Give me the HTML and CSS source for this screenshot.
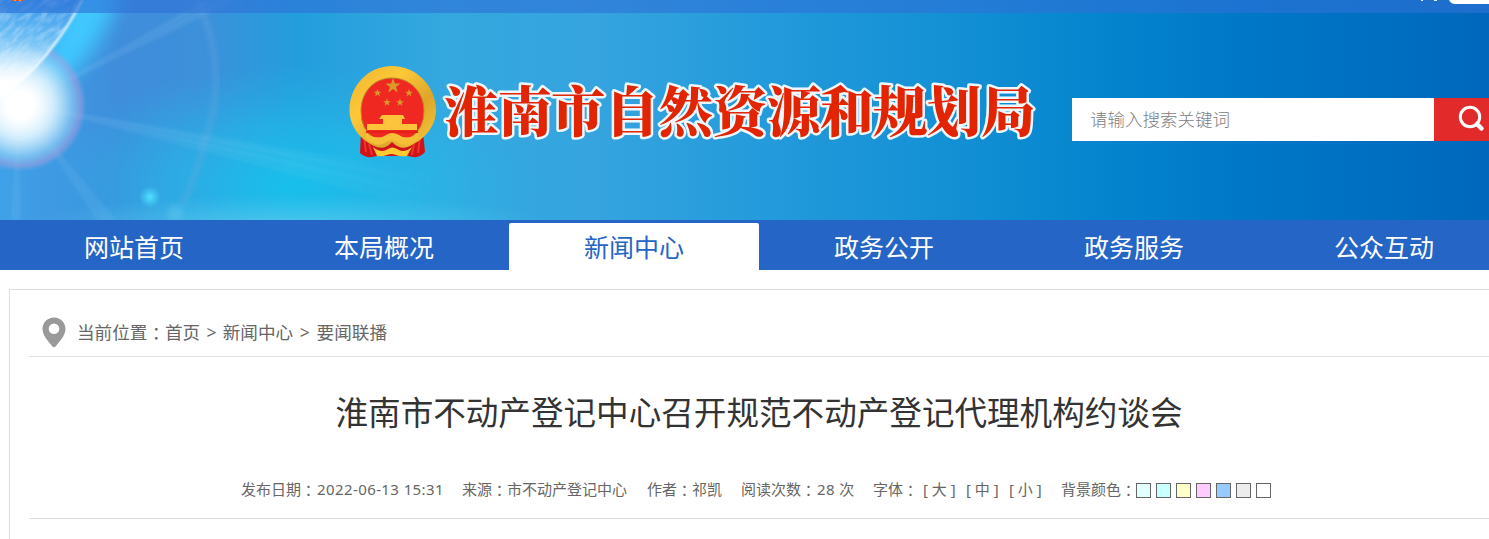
FILE: index.html
```html
<!DOCTYPE html>
<html lang="zh-CN">
<head>
<meta charset="utf-8">
<title>淮南市自然资源和规划局</title>
<link rel="stylesheet" href="styles.css">
</head>
<body>
<header class="header">
  <svg class="sky" viewBox="0 0 1489 220" width="1489" height="220" aria-hidden="true">
    <defs>
      <linearGradient id="base">
        <stop offset="0" stop-color="#3fa2e8"/><stop offset=".08" stop-color="#3f8ddb"/><stop offset=".135" stop-color="#3d90da"/><stop offset=".2" stop-color="#239edd"/><stop offset=".3" stop-color="#34a8df"/><stop offset=".4" stop-color="#35a4df"/><stop offset=".52" stop-color="#229adb"/><stop offset=".65" stop-color="#128fd4"/><stop offset=".73" stop-color="#0586ce"/><stop offset=".84" stop-color="#0077c7"/><stop offset="1" stop-color="#0068bc"/>
      </linearGradient>
      <radialGradient id="cyan"><stop offset="0" stop-color="#16c6ee" stop-opacity=".85"/><stop offset=".5" stop-color="#1fc2ec" stop-opacity=".5"/><stop offset="1" stop-color="#25b8e8" stop-opacity="0"/></radialGradient>
      <radialGradient id="foot"><stop offset="0" stop-color="#68d0f0" stop-opacity=".75"/><stop offset="1" stop-color="#55cdf0" stop-opacity="0"/></radialGradient>
      <radialGradient id="halo"><stop offset="0" stop-color="#e8f8ff"/><stop offset=".5" stop-color="#b5e4fd" stop-opacity=".85"/><stop offset=".78" stop-color="#78c6f6" stop-opacity=".55"/><stop offset=".91" stop-color="#b3a0e0" stop-opacity=".5"/><stop offset="1" stop-color="#80a8e8" stop-opacity="0"/></radialGradient>
      <radialGradient id="sun"><stop offset="0" stop-color="#fff"/><stop offset=".22" stop-color="#fff"/><stop offset=".55" stop-color="#fff" stop-opacity=".5"/><stop offset="1" stop-color="#fff" stop-opacity="0"/></radialGradient>
      <radialGradient id="dot"><stop offset="0" stop-color="#50e4ff"/><stop offset="1" stop-color="#50d4ff" stop-opacity="0"/></radialGradient>
      <linearGradient id="ray" gradientUnits="userSpaceOnUse" x1="20" y1="0" x2="440" y2="0"><stop offset="0" stop-color="#c4e8ff" stop-opacity=".08"/><stop offset=".65" stop-color="#c4e8ff" stop-opacity=".06"/><stop offset="1" stop-color="#c4e8ff" stop-opacity="0"/></linearGradient>
      <linearGradient id="planet" gradientUnits="userSpaceOnUse" x1="35" y1="0" x2="25" y2="85"><stop offset="0" stop-color="#3b98ea"/><stop offset=".4" stop-color="#63b9f4"/><stop offset=".75" stop-color="#b8e2fc"/><stop offset="1" stop-color="#fff"/></linearGradient>
      <filter id="b1"><feGaussianBlur stdDeviation="1"/></filter>
      <filter id="b2"><feGaussianBlur stdDeviation="2.500"/></filter>
      <filter id="b9" x="-50%" y="-50%" width="200%" height="200%"><feGaussianBlur stdDeviation="10"/></filter>
      <filter id="clouds" x="0" y="0" width="100%" height="100%"><feTurbulence type="fractalNoise" baseFrequency=".07 .24" numOctaves="3" seed="4"/><feColorMatrix values="0 0 0 0 1  0 0 0 0 1  0 0 0 0 1  2.6 0 0 0 -1.05"/></filter>
      <clipPath id="disc"><path d="M0 0H82Q52 60 0 99Z"/></clipPath>
    </defs>
    <rect width="1489" height="220" fill="url(#base)"/>
    <ellipse cx="290" cy="185" rx="250" ry="120" fill="url(#cyan)"/>
    <ellipse cx="290" cy="230" rx="270" ry="36" fill="url(#foot)"/>
    <path d="M75 -15H122Q100 60 55 85L30 92Z" fill="#3fc8ff" filter="url(#b9)"/>
    <path d="M198 0Q230 75 205 140Q197 175 182 205" fill="none" stroke="#79a9df" stroke-opacity=".28" stroke-width="6" filter="url(#b2)"/>
    <g fill="url(#ray)" filter="url(#b1)">
      <path d="M20 105L204 0H238Z"/><path d="M20 105L210 0H214Z"/><path d="M20 105L222 0H227Z"/>
      <path d="M20 103L480 181V224Z"/><path d="M20 103L480 189V194Z"/><path d="M20 103L480 203V208Z"/>
      <path d="M20 105L97 220H116Z"/><path d="M18 105L11 220H21Z"/>
    </g>
    <circle cx="20" cy="105" r="67" fill="url(#halo)"/>
    <g clip-path="url(#disc)"><rect width="90" height="102" fill="url(#planet)"/><g transform="rotate(-42)"><rect x="-90" y="-10" width="180" height="150" filter="url(#clouds)" opacity=".3"/></g></g>
    <path d="M82 0Q52 60 0 99" fill="none" stroke="#e9faff" stroke-width="2" filter="url(#b1)"/>
    <circle cx="20" cy="105" r="60" fill="url(#sun)"/>
    <circle cx="150" cy="197" r="11" fill="url(#dot)"/>
    <circle cx="175" cy="213" r="8" fill="#8fdcf5" opacity=".2" filter="url(#b2)"/>
  </svg>
  <div class="topbar">
    <svg width="1489" height="13" viewBox="0 0 1489 13" aria-hidden="true"><path d="M12 0H23V1H12Z" fill="#e7502d"/><path d="M14 0h2v1h-2zM19 0h2v1h-2z" fill="#f5a03c"/><path d="M1421 0h2v1h-2zM1434 0h3v1h-3z" fill="#e4eefa"/><path d="M1449 0H1489V4H1455Q1451 4 1449 0Z" fill="#fff"/></svg>
  </div>
  <div class="banner">
    <svg class="logo" width="700" height="110" viewBox="340 55 700 110" role="img" aria-label="淮南市自然资源和规划局">
      <defs>
        <linearGradient id="gold" x1="0" y1="0" x2="1" y2="1"><stop offset="0" stop-color="#f0b52f"/><stop offset=".35" stop-color="#fcc838"/><stop offset=".65" stop-color="#dda62a"/><stop offset="1" stop-color="#fbca3b"/></linearGradient>
        <path id="star" d="M0-8L1.9-2.6H7.6L3 .9L4.8 6.5L0 3.1L-4.8 6.5L-3 .9L-7.6-2.6H-1.9Z"/>
      </defs>
      <path d="M361 132L360 153Q365 158 372 157L377 156H408L413 157Q420 158 425 152L423 132Z" fill="#cf1318"/>
      <path d="M364 136L366 152M369 144L372 155M420 136L418 153M414 144L412 155" stroke="#ed352b" stroke-width="2"/>
      <path fill="url(#gold)" fill-rule="evenodd" d="M392 66C416 66 436 86 436 110C436 126 425 139 410 146Q401 151 392 142Q384 151 374 146C359 139 349.500 125 349.500 110C349.500 86 368 66 392 66ZM392 78C374 78 361 92 361 111Q361 130 374 138H410Q424 129 424 111C424 92 410 78 392 78Z"/>
      <path d="M392 78C374 78 361 92 361 111Q361 130 374 138H410Q424 129 424 111C424 92 410 78 392 78Z" fill="#ef2821" stroke="#c9861d" stroke-width="1"/>
      <g fill="#d99a2b"><use href="#star" x="393" y="86"/><use href="#star" transform="translate(377.500 93) scale(.52)"/><use href="#star" transform="translate(409 93) scale(.52)"/><use href="#star" transform="translate(387 102.500) scale(.52)"/><use href="#star" transform="translate(400 102.500) scale(.52)"/></g>
      <path d="M382 115H403L405 119H402V124H417V130H367V124H383V119H379Z" fill="#fbc43a"/>
      <path d="M366 131H418V133H366Z" fill="#e42018"/>
      <path d="M366 133Q378 141 386 135Q392 131 399 135Q407 141 418 133L419 138Q408 148 398 143Q391 138 385 143Q376 148 365 138Z" fill="#f5bf38"/>
      <path d="M373 147Q381 154 388 149Q392 146 397 149Q404 154 412 147L407 156Q401 157 396 155Q391 153 387 155Q381 157 377 156Z" fill="#ffc934"/>
      <text class="logo-text" y="132" x="444 498 551 605 659 713 767 820 873 927 981">淮南市自然资源和规划局</text>
    </svg>
    <form class="search">
      <input class="search-input" type="text" placeholder="请输入搜索关键词" aria-label="搜索">
      <button class="search-button" type="button" aria-label="搜索"><svg width="30" height="30" viewBox="0 0 30 30"><circle cx="14" cy="14" r="9.700" fill="none" stroke="#fff" stroke-width="3"/><path d="M21 21L25.500 25.500" stroke="#fff" stroke-width="4.500" stroke-linecap="round"/></svg></button>
    </form>
  </div>
</header>
<nav class="nav">
  <a>网站首页</a><a>本局概况</a><a class="active">新闻中心</a><a>政务公开</a><a>政务服务</a><a>公众互动</a>
</nav>
<main class="panel">
  <div class="crumbs">
    <svg class="pin" width="24" height="31" viewBox="0 0 24 31"><path fill="#999" fill-rule="evenodd" d="M12 .500C5.500.500.500 5.500.500 12C.500 18 6 24 10 29Q12 31.500 14 29C18 24 23.500 18 23.500 12C23.500 5.500 18.500.500 12 .500ZM12 6.500A5.300 5.300 0 1 1 12 17.100A5.300 5.300 0 1 1 12 6.500Z"/></svg>
    <span class="where">当前位置<i class="colon" lang="zh-TW">：</i></span><a class="c1">首页</a><span class="c2">&gt;</span><a class="c3">新闻中心</a><span class="c2 c4">&gt;</span><a>要闻联播</a>
  </div>
  <h1 class="title">淮南市不动产登记中心召开规范不动产登记代理机构约谈会</h1>
  <div class="meta">
    <span class="m-date">发布日期<i class="colon" lang="zh-TW">：</i><span class="digits">2022-06-13 15:31</span></span>
    <span class="m-source">来源<i class="colon" lang="zh-TW">：</i>市不动产登记中心</span>
    <span class="m-author">作者<i class="colon" lang="zh-TW">：</i>祁凯</span>
    <span class="m-count">阅读次数<i class="colon" lang="zh-TW">：</i><span class="digits">28 </span>次</span>
    <span class="m-font">字体<i class="colon" lang="zh-TW">：</i></span>
    <a class="m-size">[ 大 ]</a><a class="m-size">[ 中 ]</a><a class="m-size m-last">[ 小 ]</a>
    <span class="m-bg">背景颜色<i class="colon" lang="zh-TW">：</i></span>
    <span class="swatches"><b class="s1"></b><b class="s2"></b><b class="s3"></b><b class="s4"></b><b class="s5"></b><b class="s6"></b><b class="s7"></b></span>
  </div>
</main>
</body>
</html>
```
FILE: styles.css
```css
* { box-sizing: border-box; }
body {
  margin: 0;
  width: 1489px;
  height: 539px;
  overflow: hidden;
  background: #fff;
  font-family: "Noto Sans", "Noto Sans CJK SC", sans-serif;
}
.header { position: relative; height: 220px; overflow: hidden; }
.sky { position: absolute; left: 0; top: 0; }
.topbar { position: relative; height: 13px; background: rgba(47, 113, 214, .62); }
.topbar svg { display: block; }
.banner { position: relative; display: flex; padding: 42px 0 0 340px; }
.logo { display: block; flex: none; }
.logo-text {
  font: 900 54px "Noto Serif CJK SC", "Noto Sans CJK SC", serif;
  fill: #e22400;
  stroke: #eef7fd;
  stroke-width: 5px;
  stroke-linejoin: round;
  paint-order: stroke;
}
.search { display: flex; height: 43px; margin: 43px 0 0 32px; }
.search-input {
  width: 362px;
  border: 0;
  padding: 0 0 2px 18px;
  background: #fff;
  font: 300 17.5px "Noto Sans CJK SC", sans-serif;
}
.search-input::placeholder { color: #808080; opacity: 1; }
.search-button {
  display: flex;
  align-items: flex-start;
  flex: none;
  width: 62px;
  border: 0;
  padding: 5px 0 0 22px;
  background: #e22a2a;
}
.search-button svg { display: block; }
.nav { display: flex; height: 50px; padding: 3px 0 0 9px; background: #2565c5; }
.nav a {
  flex: none;
  width: 250px;
  height: 47px;
  text-align: center;
  color: #fff;
  font-size: 25px;
  line-height: 48px;
}
.nav .active { background: #fff; color: #2565c5; border-radius: 2px 2px 0 0; }
.panel {
  margin: 19px 0 0 9px;
  height: 260px;
  padding-left: 19px;
  border: solid #ddd;
  border-width: 1px 0 0 1px;
}
.crumbs {
  display: flex;
  height: 67px;
  padding: 27px 0 0 13px;
  border-bottom: 1px solid #ddd;
  color: #666;
  font-size: 17.6px;
  line-height: 31px;
}
.pin { flex: none; margin-right: 11px; }
.colon {
  font-style: normal;
  font-family: "Noto Sans CJK TC", sans-serif;
  line-height: 1;
  vertical-align: -1px;
}
.where { width: 88px; white-space: nowrap; }
.c2 { width: 22.5px; text-align: center; }
.c4 { width: 23.5px; }
.title {
  height: 111px;
  margin: 0;
  text-align: center;
  color: #333;
  font-weight: 400;
  font-size: 32.6px;
  line-height: 112px;
}
.meta {
  display: flex;
  height: 51px;
  padding-left: 212px;
  border-bottom: 1px solid #ddd;
  color: #666;
  font-size: 15px;
  line-height: 43px;
  white-space: nowrap;
}
.meta > span, .meta > a { flex: none; }
.digits { margin-left: 1px; letter-spacing: .4px; }
.m-date { width: 221px; }
.m-source { width: 185px; }
.m-author { width: 94px; }
.m-count { width: 132px; }
.m-font { width: 50px; }
.m-size { width: 43px; }
.m-last { width: 52px; }
.m-bg { width: 75px; }
.swatches { display: flex; gap: 5px; padding: 15px 0 0; }
.swatches b { width: 15px; height: 15px; border: 1px solid #666; }
.s1 { background: #e3fffe; }
.s2 { background: #c9fffe; }
.s3 { background: #ffffc9; }
.s4 { background: #fdcbfd; }
.s5 { background: #98cbfd; }
.s6 { background: #ededed; }
.s7 { background: #fff; }
```
